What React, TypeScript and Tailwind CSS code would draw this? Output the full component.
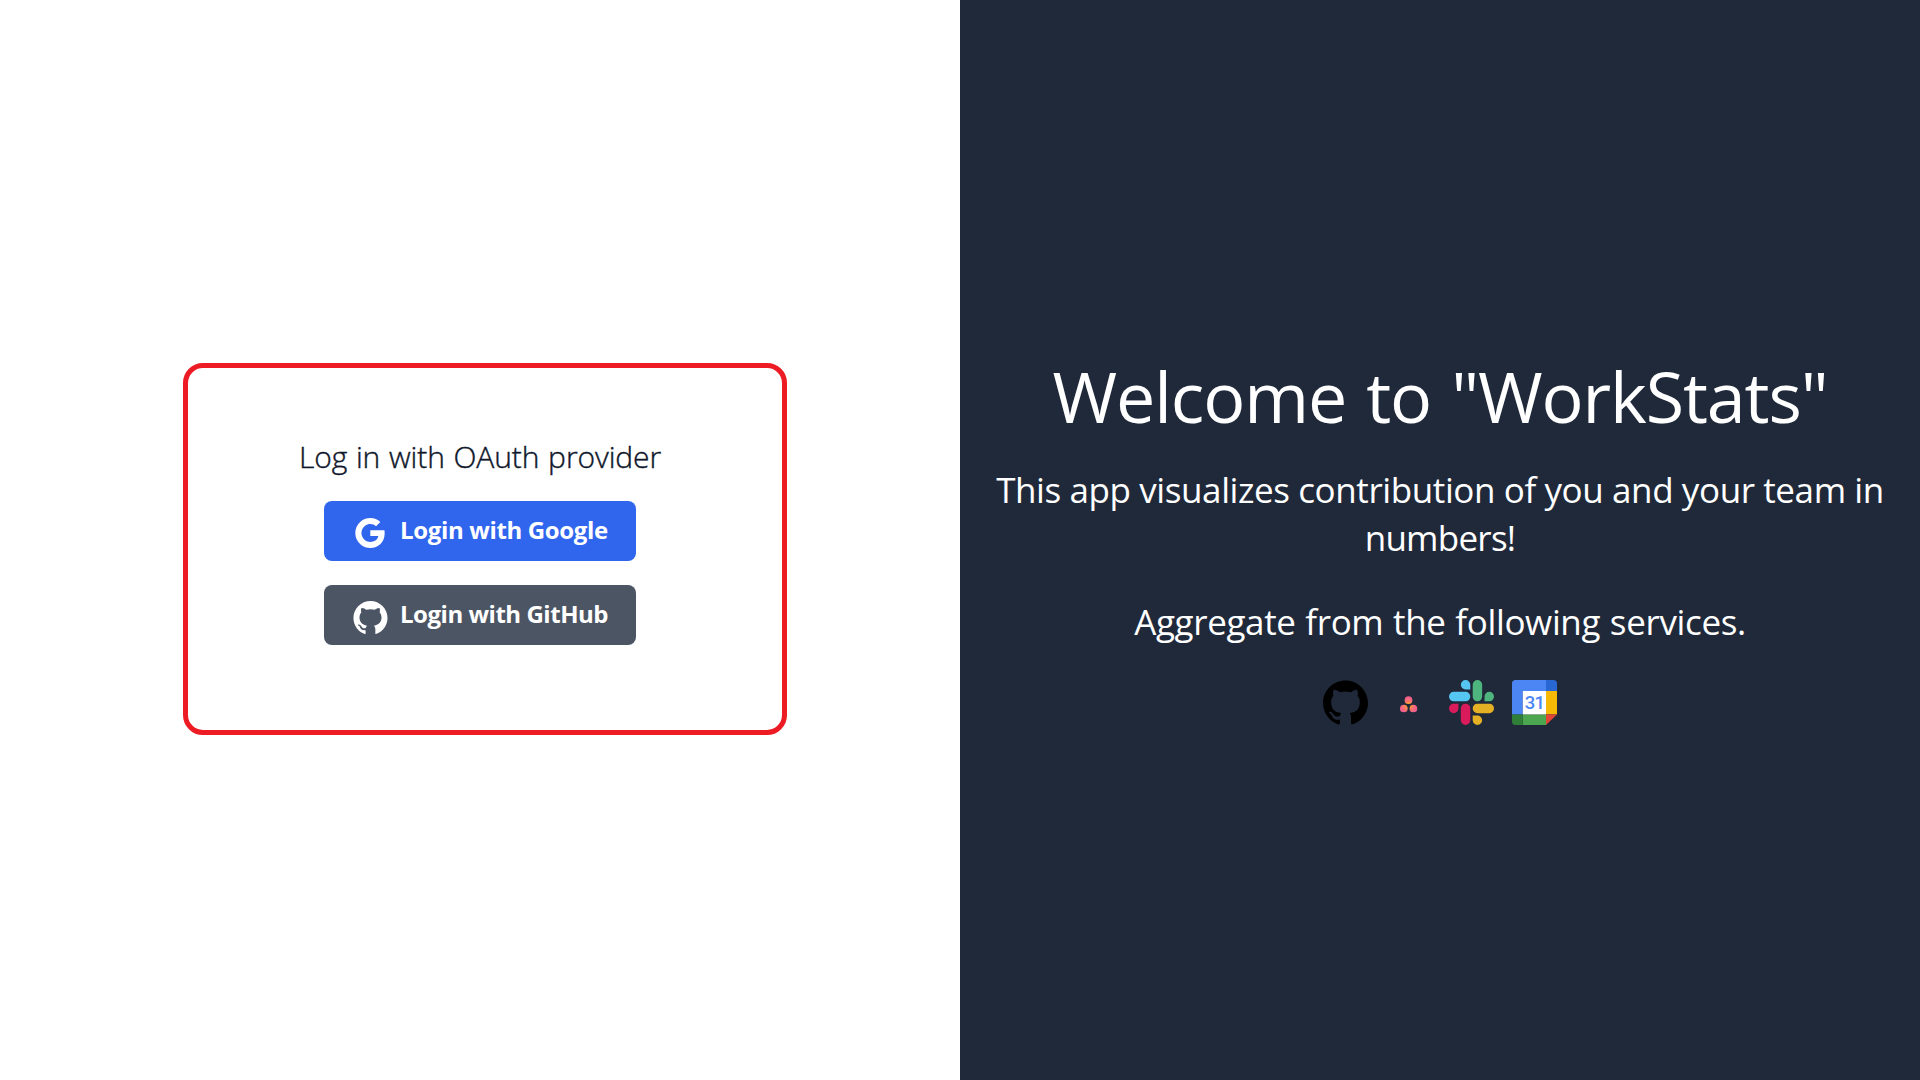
import type { ReactNode } from 'react';
import { AiFillGithub, AiOutlineGoogle } from 'react-icons/ai';
import { SiGithub } from 'react-icons/si';

function LoginButton({ icon, className, children }: { icon: ReactNode; className: string; children: ReactNode }) {
  return (
    <button className={`flex h-[60px] w-[312px] items-center rounded-lg pl-[26px] text-2xl leading-8 font-bold text-white ${className}`}>
      <span className="mt-[4px] mr-[10px] flex w-10 justify-center">{icon}</span>
      <span className="pb-[2px] whitespace-nowrap">{children}</span>
    </button>
  );
}

function AsanaIcon() {
  return (
    <svg className="size-[45px]" viewBox="0 0 45 45">
      <defs>
        <radialGradient id="asana" gradientUnits="userSpaceOnUse" cx="22.5" cy="25.5" r="10">
          <stop offset="0" stopColor="#ffb900" />
          <stop offset="0.45" stopColor="#f9776b" />
          <stop offset="0.8" stopColor="#f25e8c" />
        </radialGradient>
      </defs>
      <g fill="url(#asana)">
        <circle cx="22.5" cy="20.2" r="3.85" />
        <circle cx="17.8" cy="28.5" r="3.85" />
        <circle cx="27.4" cy="28.5" r="3.85" />
      </g>
    </svg>
  );
}

function SlackIcon() {
  return (
    <svg className="size-[45px]" viewBox="0 0 24 24">
      <path fill="#d91b5c" d="M5.042 15.165a2.528 2.528 0 0 1-2.52 2.523A2.528 2.528 0 0 1 0 15.165a2.527 2.527 0 0 1 2.522-2.52h2.52v2.52zM6.313 15.165a2.527 2.527 0 0 1 2.521-2.52 2.527 2.527 0 0 1 2.521 2.52v6.313A2.528 2.528 0 0 1 8.834 24a2.528 2.528 0 0 1-2.521-2.522v-6.313z" />
      <path fill="#55c5f1" d="M8.834 5.042a2.528 2.528 0 0 1-2.521-2.52A2.528 2.528 0 0 1 8.834 0a2.528 2.528 0 0 1 2.521 2.522v2.52H8.834zM8.834 6.313a2.528 2.528 0 0 1 2.521 2.521 2.528 2.528 0 0 1-2.521 2.521H2.522A2.528 2.528 0 0 1 0 8.834a2.528 2.528 0 0 1 2.522-2.521h6.312z" />
      <path fill="#4fb57f" d="M18.956 8.834a2.528 2.528 0 0 1 2.522-2.521A2.528 2.528 0 0 1 24 8.834a2.528 2.528 0 0 1-2.522 2.521h-2.522V8.834zM17.688 8.834a2.528 2.528 0 0 1-2.523 2.521 2.527 2.527 0 0 1-2.52-2.521V2.522A2.527 2.527 0 0 1 15.165 0a2.528 2.528 0 0 1 2.523 2.522v6.312z" />
      <path fill="#e6b024" d="M15.165 18.956a2.528 2.528 0 0 1 2.523 2.522A2.528 2.528 0 0 1 15.165 24a2.527 2.527 0 0 1-2.52-2.522v-2.522h2.52zM15.165 17.688a2.527 2.527 0 0 1-2.52-2.523 2.526 2.526 0 0 1 2.52-2.52h6.313A2.527 2.527 0 0 1 24 15.165a2.528 2.528 0 0 1-2.522 2.523h-6.313z" />
    </svg>
  );
}

function CalendarIcon() {
  return (
    <svg className="size-[45px]" viewBox="0 0 45 45">
      <path fill="#4c86f5" d="M3.5 0H34v11H10.8v23.4H0V3.5A3.5 3.5 0 0 1 3.5 0z" />
      <path fill="#2967d2" d="M34 0h7.5A3.5 3.5 0 0 1 45 3.5V11H34z" />
      <path fill="#f6ba05" d="M34 11h11v23.4H34z" />
      <path fill="#4ba64f" d="M10.8 34.4H34V45H10.8z" />
      <path fill="#2f7f38" d="M0 34.4h10.8V45H3.5A3.5 3.5 0 0 1 0 41.5z" />
      <path fill="#e24535" d="M34 34.4h11L34 45z" />
      <path fill="#fff" d="M10.8 11H34v23.4H10.8z" />
      <text x="22.5" y="29.4" textAnchor="middle" fontFamily="Roboto, sans-serif" fontSize="18.5" fontWeight="500" letterSpacing="-0.8" fill="#4c86f5">
        31
      </text>
    </svg>
  );
}

export default function App() {
  return (
    <main className="flex h-screen w-full overflow-hidden bg-white font-['Open_Sans','Noto_Sans',sans-serif]">
      <section className="w-1/2 pt-[363px] pl-[183px]">
        <div className="h-[372px] w-[604px] rounded-[20px] border-[5px] border-[#ed1c24] pt-[71px] pr-[10px]">
          <div className="flex flex-col items-center">
            <h2 className="text-[30px] leading-9 font-light tracking-[-0.09px] whitespace-nowrap text-slate-900 [-webkit-text-stroke:0.4px_#0f172a] [word-spacing:1px]">
              Log in with OAuth provider
            </h2>
            <div className="mt-[26px] flex flex-col gap-6">
              <LoginButton className="bg-[#3065ee] tracking-[-0.35px]" icon={<AiOutlineGoogle className="size-10" />}>
                Login with Google
              </LoginButton>
              <LoginButton className="bg-[#4c5564] tracking-[-0.47px]" icon={<AiFillGithub className="size-[39px]" />}>
                Login with GitHub
              </LoginButton>
            </div>
          </div>
        </div>
      </section>

      <section className="flex w-1/2 flex-col items-center bg-[#20293a] pt-[360px] text-center text-white">
        <h1 className="text-[70px] leading-[72px] tracking-[-1.1px] whitespace-nowrap [word-spacing:3px]">Welcome to "WorkStats"</h1>
        <p className="mt-[34px] text-[35px] leading-[48px] tracking-[-0.4px] whitespace-nowrap">
          This app visualizes contribution of you and your team in
          <br />
          <span className="tracking-[-0.75px]">numbers!</span>
        </p>
        <p className="mt-9 text-[35px] leading-[48px] tracking-[-0.36px] whitespace-nowrap [word-spacing:1px]">
          Aggregate from the following services.
        </p>
        <div className="mt-[34px] flex gap-[18px]">
          <SiGithub className="size-[45px] text-black" />
          <AsanaIcon />
          <SlackIcon />
          <CalendarIcon />
        </div>
      </section>
    </main>
  );
}
